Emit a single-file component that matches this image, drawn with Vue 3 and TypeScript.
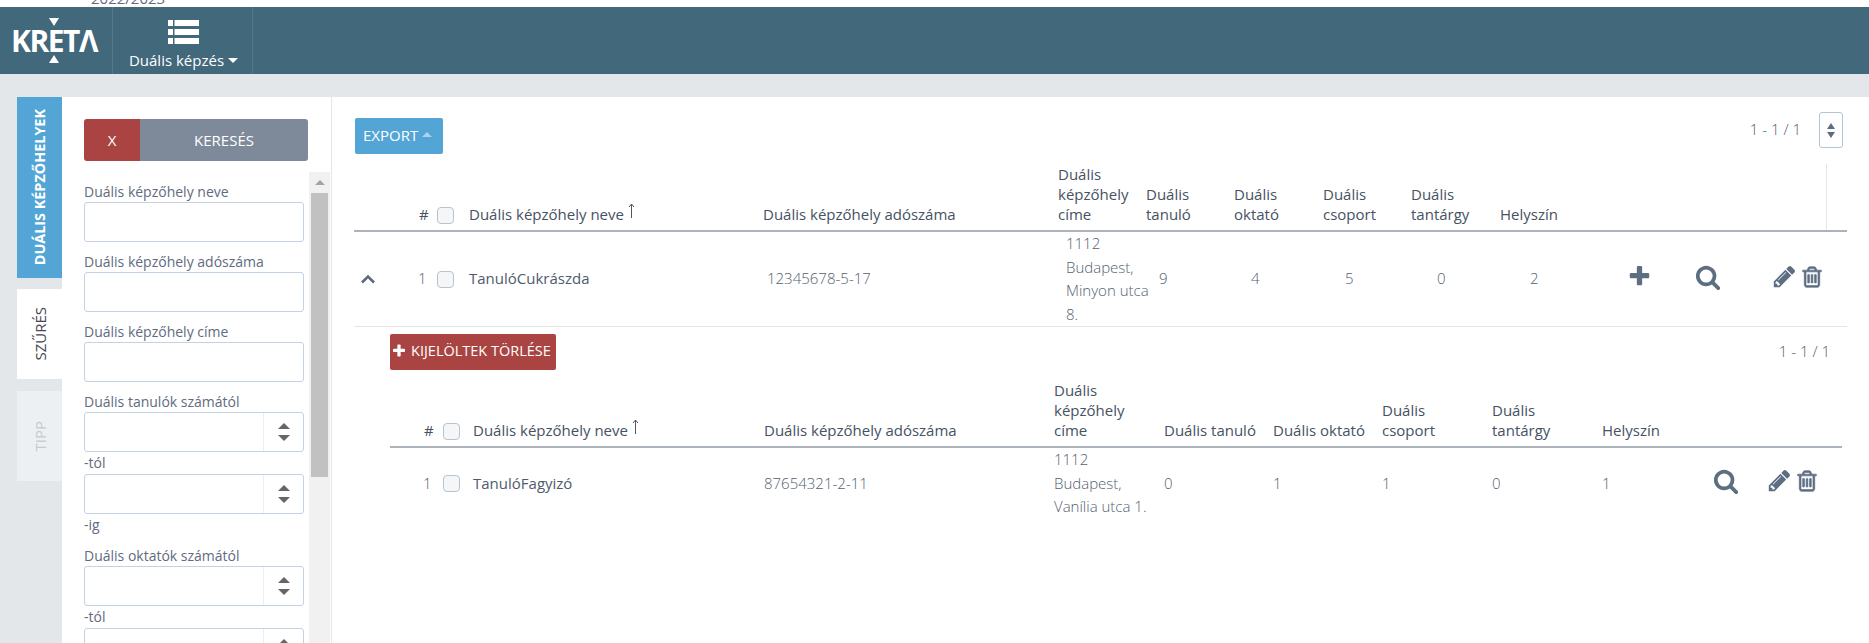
<script setup lang="ts">
interface Field {
  label: string
  spin?: boolean
  suffix?: string
}

const fields: Field[] = [
  { label: 'Duális képzőhely neve' },
  { label: 'Duális képzőhely adószáma' },
  { label: 'Duális képzőhely címe' },
  { label: 'Duális tanulók számától', spin: true, suffix: '-tól' },
  { label: '', spin: true, suffix: '-ig' },
  { label: 'Duális oktatók számától', spin: true, suffix: '-tól' },
  { label: '', spin: true },
]

const outerHead = ['Duális\nképzőhely\ncíme', 'Duális\ntanuló', 'Duális\noktató', 'Duális\ncsoport', 'Duális\ntantárgy', 'Helyszín']
const outerHeadW = [88, 88, 89, 88, 89, 88]
const outerBodyW = [93, 92, 94, 92, 93, 92]
const outerVals = ['9', '4', '5', '0', '2']

const innerHead = ['Duális\nképzőhely\ncíme', 'Duális tanuló', 'Duális oktató', 'Duális\ncsoport', 'Duális\ntantárgy', 'Helyszín']
const innerW = [110, 109, 109, 110, 110, 105]
const innerVals = ['0', '1', '1', '0', '1']

const plusPath = 'M1600 736v192q0 40-28 68t-68 28h-416v416q0 40-28 68t-68 28h-192q-40 0-68-28t-28-68v-416h-416q-40 0-68-28t-28-68v-192q0-40 28-68t68-28h416v-416q0-40 28-68t68-28h192q40 0 68 28t28 68v416h416q40 0 68 28t28 68z'
const searchPath = 'M1216 832q0-185-131.500-316.500t-316.500-131.500-316.500 131.500-131.500 316.500 131.500 316.500 316.500 131.500 316.500-131.500 131.500-316.500zm512 832q0 52-38 90t-90 38q-54 0-90-38l-343-342q-179 124-399 124-143 0-273.500-55.500t-225-150-150-225-55.500-273.500 55.500-273.500 150-225 225-150 273.500-55.500 273.500 55.500 225 150 150 225 55.500 273.500q0 220-124 399l343 343q37 37 37 90z'
const pencilPath = 'M491 1536l91-91-235-235-91 91v107h128v128h107zm523-928q0-22-22-22-10 0-17 7l-542 542q-7 7-7 17 0 22 22 22 10 0 17-7l542-542q7-7 7-17zm-54-192l416 416-832 832h-416v-416zm683 96q0 53-37 90l-166 166-416-416 166-165q36-38 90-38 53 0 91 38l235 234q37 39 37 91z'
const trashPath = 'M704 736v576q0 14-9 23t-23 9h-64q-14 0-23-9t-9-23v-576q0-14 9-23t23-9h64q14 0 23 9t9 23zm256 0v576q0 14-9 23t-23 9h-64q-14 0-23-9t-9-23v-576q0-14 9-23t23-9h64q14 0 23 9t9 23zm256 0v576q0 14-9 23t-23 9h-64q-14 0-23-9t-9-23v-576q0-14 9-23t23-9h64q14 0 23 9t9 23zm128 724v-948h-896v948q0 22 7 40.500t14.500 27 10.500 8.500h832q3 0 10.500-8.500t14.500-27 7-40.500zm-672-1076h448l-48-117q-7-9-17-11h-317q-10 2-17 11zm928 32v64q0 14-9 23t-23 9h-96v948q0 83-47 143.500t-113 60.500h-832q-66 0-113-58.500t-47-141.500v-952h-96q-14 0-23-9t-9-23v-64q0-14 9-23t23-9h309l70-167q15-37 54-63t79-26h320q40 0 79 26t54 63l70 167h309q14 0 23 9t9 23z'
</script>

<template>
  <div class="page">
    <div class="year-strip"><span class="year">2022/2023</span></div>

    <header class="topbar">
      <div class="logo-cell">
        <div class="logo">
          <i class="tri tri-down"></i>
          <span class="logo-text">KRETΛ</span>
          <i class="tri tri-up"></i>
        </div>
      </div>
      <div class="nav-cell">
        <svg class="nav-icon" width="31" height="24" viewBox="0 0 31 24" fill="#fff">
          <rect x="0" y="0" width="5" height="6" /><rect x="6.500" y="0" width="24.500" height="6" />
          <rect x="0" y="9" width="5" height="6" /><rect x="6.500" y="9" width="24.500" height="6" />
          <rect x="0" y="18" width="5" height="6" /><rect x="6.500" y="18" width="24.500" height="6" />
        </svg>
        <div class="nav-label">Duális képzés<i class="caret"></i></div>
      </div>
    </header>

    <div class="band"></div>

    <div class="workspace">
      <nav class="tabs">
        <div class="tab tab-active"><span>DUÁLIS KÉPZŐHELYEK</span></div>
        <div class="tab tab-filter"><span>SZŰRÉS</span></div>
        <div class="tab tab-tip"><span>TIPP</span></div>
      </nav>

      <aside class="panel">
        <div class="btn-group">
          <button class="btn-x">X</button>
          <button class="btn-search">KERESÉS</button>
        </div>
        <div class="scroll-area">
          <div class="fields">
            <div v-for="(f, i) in fields" :key="i" class="field" :class="{ joined: !f.label }">
              <label v-if="f.label">{{ f.label }}</label>
              <div class="input-wrap">
                <input class="text-input" type="text" />
                <div v-if="f.spin" class="spin">
                  <i class="sp-up"></i>
                  <i class="sp-down"></i>
                </div>
              </div>
              <div v-if="f.suffix" class="suffix">{{ f.suffix }}</div>
            </div>
          </div>
          <div class="scrollbar">
            <i class="sb-arrow"></i>
            <div class="sb-thumb"></div>
          </div>
        </div>
      </aside>

      <main class="main">
        <div class="toolbar">
          <button class="btn-export">EXPORT<i class="caret-up"></i></button>
          <div class="pager">
            <span>1 - 1 / 1</span>
            <div class="pager-btn"><i class="sp-up small"></i><i class="sp-down small"></i></div>
          </div>
        </div>

        <table class="grid grid-head">
          <colgroup>
            <col style="width: 61px" /><col style="width: 18px" /><col style="width: 32px" />
            <col style="width: 294px" /><col style="width: 295px" />
            <col v-for="(w, i) in outerHeadW" :key="i" :style="{ width: w + 'px' }" />
            <col style="width: 242px" /><col style="width: 21px" />
          </colgroup>
          <thead>
            <tr>
              <th></th>
              <th>#</th>
              <th><input class="check" type="checkbox" /></th>
              <th>Duális képzőhely neve <svg class="sort" width="7" height="15" viewBox="0 0 7 15"><path d="M3.500 1v14M1 4l2.500-3L6 4" fill="none" stroke="#556" stroke-width="1" /></svg></th>
              <th>Duális képzőhely adószáma</th>
              <th v-for="h in outerHead" :key="h">{{ h }}</th>
              <th></th>
              <th class="spacer"></th>
            </tr>
          </thead>
        </table>

        <table class="grid grid-body outer-body">
          <colgroup>
            <col style="width: 61px" /><col style="width: 18px" /><col style="width: 32px" />
            <col style="width: 298px" /><col style="width: 299px" />
            <col v-for="(w, i) in outerBodyW" :key="i" :style="{ width: w + 'px' }" />
            <col style="width: 67px" /><col style="width: 80px" /><col style="width: 82px" />
          </colgroup>
          <tbody>
            <tr>
              <td class="toggle">
                <svg width="16" height="11" viewBox="0 0 16 11"><path d="M2 9.500 8 3.500l6 6" fill="none" stroke="#5d6a78" stroke-width="2.600" /></svg>
              </td>
              <td class="num">1</td>
              <td><input class="check" type="checkbox" /></td>
              <td class="name">TanulóCukrászda</td>
              <td>12345678-5-17</td>
              <td class="addr">{{ '1112\nBudapest,\nMinyon utca\n8.' }}</td>
              <td v-for="(v, i) in outerVals" :key="i">{{ v }}</td>
              <td class="icon-cell"><svg class="ico" width="23" height="25" viewBox="0 0 1664 1792" fill="#5d6e82"><path :d="plusPath" transform="translate(-64 0)" /></svg></td>
              <td class="icon-cell"><svg class="ico" width="26" height="26" viewBox="0 0 1792 1792" fill="#5d6e82"><path :d="searchPath" /></svg></td>
              <td class="actions">
                <svg class="ico" width="25" height="25" viewBox="0 0 1792 1792" fill="#5d6e82"><path :d="pencilPath" /></svg>
                <svg class="ico trash" width="24" height="24" viewBox="0 0 1792 1792" fill="#5d6e82"><path :d="trashPath" stroke="#5d6e82" stroke-width="50" /></svg>
              </td>
            </tr>
          </tbody>
        </table>

        <section class="sub">
          <div class="sub-bar">
            <button class="btn-delete">
              <svg width="12" height="14" viewBox="192 192 1408 1408" fill="#fff"><path :d="plusPath" /></svg>
              KIJELÖLTEK TÖRLÉSE
            </button>
            <span class="sub-pager">1 - 1 / 1</span>
          </div>

          <table class="grid inner">
            <colgroup>
              <col style="width: 30px" /><col style="width: 19px" /><col style="width: 30px" />
              <col style="width: 291px" /><col style="width: 290px" />
              <col v-for="(w, i) in innerW" :key="i" :style="{ width: w + 'px' }" />
              <col style="width: 55px" /><col style="width: 84px" />
            </colgroup>
            <thead>
              <tr>
                <th></th>
                <th>#</th>
                <th><input class="check" type="checkbox" /></th>
                <th>Duális képzőhely neve <svg class="sort" width="7" height="15" viewBox="0 0 7 15"><path d="M3.500 1v14M1 4l2.500-3L6 4" fill="none" stroke="#556" stroke-width="1" /></svg></th>
                <th>Duális képzőhely adószáma</th>
                <th v-for="h in innerHead" :key="h">{{ h }}</th>
                <th></th>
                <th></th>
              </tr>
            </thead>
            <tbody>
              <tr>
                <td></td>
                <td class="num">1</td>
                <td><input class="check" type="checkbox" /></td>
                <td class="name">TanulóFagyizó</td>
                <td>87654321-2-11</td>
                <td class="addr">{{ '1112\nBudapest,\nVanília utca 1.' }}</td>
                <td v-for="(v, i) in innerVals" :key="i">{{ v }}</td>
                <td class="icon-cell"><svg class="ico" width="26" height="26" viewBox="0 0 1792 1792" fill="#5d6e82"><path :d="searchPath" /></svg></td>
                <td class="actions actions-inner">
                  <svg class="ico" width="25" height="25" viewBox="0 0 1792 1792" fill="#5d6e82"><path :d="pencilPath" /></svg>
                  <svg class="ico trash" width="24" height="24" viewBox="0 0 1792 1792" fill="#5d6e82"><path :d="trashPath" stroke="#5d6e82" stroke-width="50" /></svg>
                </td>
              </tr>
            </tbody>
          </table>
        </section>
      </main>
    </div>
  </div>
</template>

<style>
html, body { margin: 0; overflow: hidden; background: #fff; }
</style>

<style scoped>
.page {
  height: 643px;
  width: 1869px;
  overflow: hidden;
  display: flex;
  flex-direction: column;
  font-family: "Open Sans", sans-serif;
  font-size: 14px;
  color: #5f6b7e;
  background: #fff;
}
i { display: block; }

.year-strip { height: 7px; overflow: hidden; padding-left: 91px; flex: none; }
.year { display: block; margin-top: -12px; line-height: 20px; font-size: 15px; color: #5f6b7e; }

.topbar { height: 67px; flex: none; display: flex; background: #42687b; color: #fff; }
.logo-cell { width: 112px; border-right: 1px solid #55798b; display: flex; justify-content: center; }
.logo { display: flex; flex-direction: column; align-items: center; padding-top: 11px; margin-left: -4px; }
.logo-text { font-size: 30px; line-height: 25px; font-weight: 700; letter-spacing: -1.500px; margin: 2px 0; }
.tri { width: 0; height: 0; border-left: 5px solid transparent; border-right: 5px solid transparent; }
.tri-down { border-top: 8px solid #fff; }
.tri-up { border-bottom: 8px solid #fff; }

.nav-cell { width: 139px; border-right: 1px solid #55798b; display: flex; flex-direction: column; align-items: center; padding-top: 13px; }
.nav-icon { display: block; margin-left: 2px; }
.nav-label { margin: 6px 0 0 2px; line-height: 20px; font-size: 15px; display: flex; align-items: center; gap: 4px; }
.caret { width: 0; height: 0; border-left: 5px solid transparent; border-right: 5px solid transparent; border-top: 5px solid #fff; }

.band { height: 23px; flex: none; background: #e4e7ea; }

.workspace { flex: 1; display: flex; min-height: 0; }

.tabs { width: 62px; flex: none; box-sizing: border-box; padding-left: 17px; background: #e4e7ea; display: flex; flex-direction: column; }
.tab { width: 45px; display: flex; align-items: center; justify-content: center; }
.tab span { writing-mode: vertical-rl; transform: rotate(180deg); white-space: nowrap; line-height: 20px; }
.tab-active { height: 181px; background: #53a5d6; color: #fff; font-weight: 700; font-size: 14.400px; }
.tab-filter { height: 90px; margin-top: 11px; background: #fff; color: #4a4653; font-size: 15px; }
.tab-tip { height: 90px; margin-top: 12px; background: #edf0f2; color: #c6cbcf; font-size: 15px; }

.panel { width: 270px; flex: none; box-sizing: border-box; border-right: 1px solid #e4e7ea; padding-top: 22px; display: flex; flex-direction: column; min-height: 0; }
.btn-group { display: flex; width: 224px; height: 42px; margin-left: 22px; flex: none; border-radius: 3px; overflow: hidden; }
.btn-group button { border: 0; color: #fff; font: inherit; font-size: 15px; padding: 0; }
.btn-x { width: 56px; background: #a94442; }
.btn-search { flex: 1; background: #7e8a9a; }

.scroll-area { display: flex; margin-top: 11px; flex: 1; min-height: 0; overflow: hidden; padding-left: 22px; }
.fields { width: 220px; flex: none; padding-top: 10px; }
.field { margin-bottom: 10px; }
.field.joined { margin-top: -10px; }
.field label { display: block; line-height: 20px; height: 20px; white-space: nowrap; }
.input-wrap { position: relative; height: 40px; }
.text-input { display: block; width: 100%; height: 40px; box-sizing: border-box; border: 1px solid #c4d2e4; border-radius: 3px; background: #fff; padding: 0 8px; margin: 0; }
.spin { position: absolute; right: 1px; top: 1px; bottom: 1px; width: 39px; border-left: 1px solid #eceef1; display: flex; flex-direction: column; align-items: center; justify-content: center; gap: 6px; }
.sp-up { width: 0; height: 0; border-left: 6px solid transparent; border-right: 6px solid transparent; border-bottom: 6px solid #666; }
.sp-down { width: 0; height: 0; border-left: 6px solid transparent; border-right: 6px solid transparent; border-top: 6px solid #666; }
.sp-up.small { border-left-width: 4.500px; border-right-width: 4.500px; border-bottom-width: 6px; border-bottom-color: #5d6e82; }
.sp-down.small { border-left-width: 4.500px; border-right-width: 4.500px; border-top-width: 6px; border-top-color: #5d6e82; }
.suffix { line-height: 22px; height: 22px; }

.scrollbar { width: 21px; margin-left: 5px; flex: none; background: #f1f1f1; display: flex; flex-direction: column; align-items: center; }
.sb-arrow { margin-top: 8px; width: 0; height: 0; border-left: 5px solid transparent; border-right: 5px solid transparent; border-bottom: 5px solid #a3a3a3; }
.sb-thumb { width: 17px; height: 284px; margin-top: 8px; background: #c1c1c1; }

.main { width: 1493px; flex: none; margin-left: 22px; min-width: 0; }

.toolbar { display: flex; justify-content: space-between; padding: 15px 4px 0 1px; height: 39px; margin-bottom: 13px; }
.btn-export { height: 36px; margin-top: 6px; width: 88px; border: 0; border-radius: 2px; background: #53a5d6; color: #fff; font: inherit; font-size: 15px; padding: 0 0 3px 8px; display: flex; align-items: center; gap: 4px; }
.caret-up { width: 0; height: 0; border-left: 5px solid transparent; border-right: 5px solid transparent; border-bottom: 5px solid #a9d3ec; }
.pager { display: flex; gap: 18px; height: 36px; line-height: 34px; font-size: 15px; font-weight: 300; color: #55616f; }
.pager-btn { width: 24px; height: 36px; box-sizing: border-box; border: 1px solid #b5c3d3; border-radius: 3px; display: flex; flex-direction: column; align-items: center; justify-content: center; gap: 3px; }

.grid { border-collapse: collapse; table-layout: fixed; width: 100%; }
.grid th { padding: 0 0 6px 4px; font-size: 15px; font-weight: 500; text-align: left; vertical-align: bottom; white-space: pre-line; line-height: 20px; color: #465262; border-bottom: 2px solid #adb3ba; }
.grid td { padding: 0 0 0 4px; font-size: 15px; line-height: 23.500px; color: #55616f; font-weight: 300; white-space: pre-line; vertical-align: middle; }
.grid td.addr { white-space: pre; overflow: visible; }
.grid .name { font-weight: 400; color: #4f5b6c; }
.grid td.num { padding-left: 3px; }
.grid th .sort { vertical-align: 2px; }
.spacer { border-left: 1px solid #e4e7ea; }
.outer-body td { border-bottom: 1px solid #e5e5e5; height: 94px; }
.ico { display: inline-block; vertical-align: middle; margin-bottom: 5px; }
.trash { margin-left: 3px; }
.grid td.icon-cell { padding-left: 10px; }
.grid td.toggle { padding-left: 6px; }
.check { appearance: none; display: block; width: 17px; height: 17px; box-sizing: border-box; margin: 0; border: 1px solid #b7c3d0; border-radius: 4px; background: #f5f6f8; }
.grid td.actions { white-space: nowrap; padding-left: 7px; }
.grid td.actions-inner { padding-left: 9px; }

.sub { margin: 7px 5px 0 36px; }
.sub-bar { display: flex; justify-content: space-between; height: 36px; margin-bottom: 10px; }
.btn-delete { width: 166px; height: 36px; border: 0; border-radius: 2px; background: #a94442; color: #fff; font: inherit; font-size: 14.500px; padding: 0 0 3px 3px; display: flex; align-items: center; gap: 6px; white-space: nowrap; }
.sub-pager { line-height: 34px; font-size: 15px; font-weight: 300; color: #55616f; margin-right: 12px; }
.inner td { height: 70px; }
</style>
